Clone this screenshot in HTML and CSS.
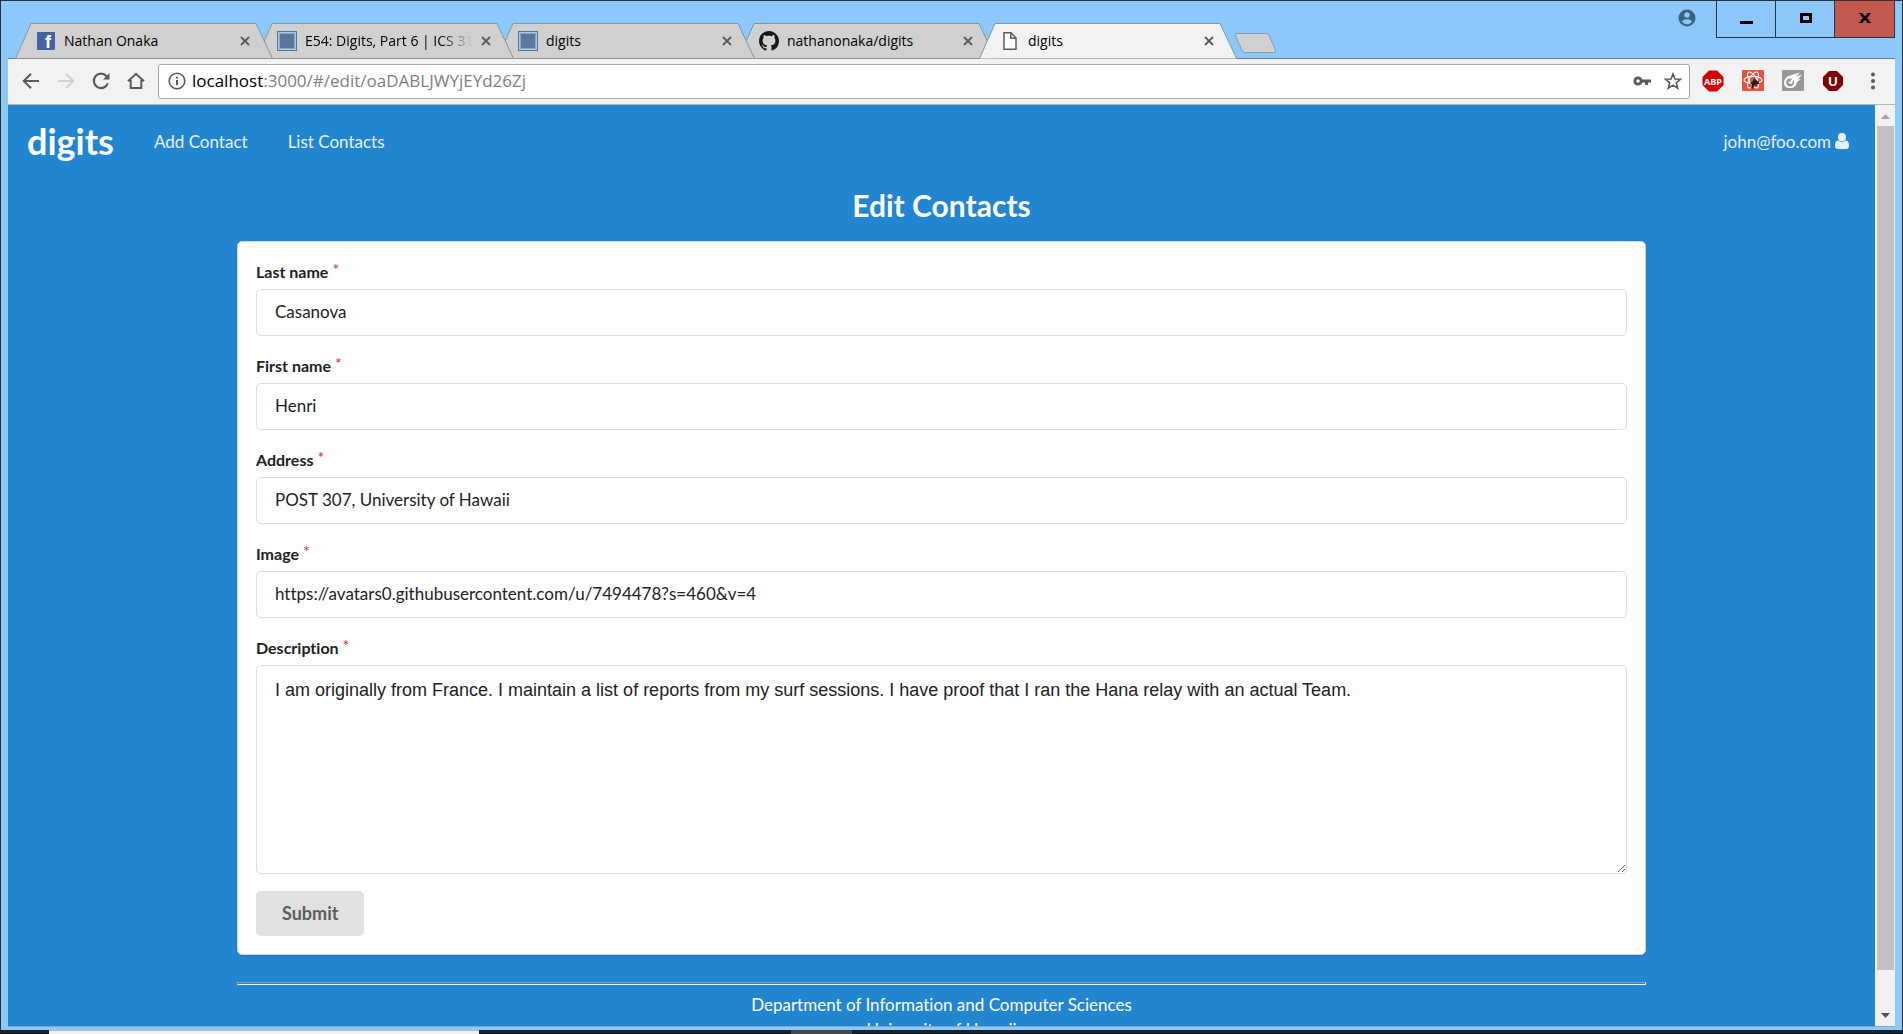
FILE: index.html
```html
<!DOCTYPE html>
<html lang="en">
<head>
<meta charset="utf-8">
<title>digits</title>
<link rel="stylesheet" href="styles.css">
</head>
<body>
<svg class="sprite" aria-hidden="true">
  <symbol id="tab-shape" viewBox="0 0 258 36"><path d="M0.500 35.500 L16 0.500 H241 L257.500 35.500"/></symbol>
  <symbol id="close" viewBox="0 0 10 10"><path d="M1 1 L9 9 M9 1 L1 9" stroke="#5a5a5a" stroke-width="1.800"/></symbol>
  <symbol id="square" viewBox="0 0 20 20"><rect x=".5" y=".5" width="19" height="19" fill="#b3c4d8" stroke="#4a78a8"/><rect x="2.500" y="2.500" width="15" height="15" fill="#5878a0" stroke="#8fa6c0"/></symbol>
</svg>
<div class="window">
  <header class="titlebar">
    <ul class="tabs">
      <li class="tab tab-1">
        <svg class="tab-bg"><use href="#tab-shape"/></svg>
        <svg class="favicon" viewBox="0 0 20 20"><rect x="1" y="1" width="18" height="18" rx="1" fill="#4661a5"/><text x="9" y="17" font-family="Liberation Sans" font-weight="bold" font-size="18" fill="#fff">f</text></svg>
        <span class="tab-title">Nathan Onaka</span>
        <button class="tab-close" aria-label="Close tab"><svg><use href="#close"/></svg></button>
      </li>
      <li class="tab tab-2">
        <svg class="tab-bg"><use href="#tab-shape"/></svg>
        <svg class="favicon"><use href="#square"/></svg>
        <span class="tab-title faded">E54: Digits, Part 6 | ICS 314</span>
        <button class="tab-close" aria-label="Close tab"><svg><use href="#close"/></svg></button>
      </li>
      <li class="tab tab-3">
        <svg class="tab-bg"><use href="#tab-shape"/></svg>
        <svg class="favicon"><use href="#square"/></svg>
        <span class="tab-title">digits</span>
        <button class="tab-close" aria-label="Close tab"><svg><use href="#close"/></svg></button>
      </li>
      <li class="tab tab-4">
        <svg class="tab-bg"><use href="#tab-shape"/></svg>
        <svg class="favicon" viewBox="0 0 16 16"><path fill="#191717" d="M8 0C3.58 0 0 3.58 0 8c0 3.54 2.29 6.53 5.47 7.59.4.07.55-.17.55-.38 0-.19-.01-.82-.01-1.49-2.01.37-2.53-.49-2.69-.94-.09-.23-.48-.94-.82-1.13-.28-.15-.68-.52-.01-.53.63-.01 1.08.58 1.23.82.72 1.21 1.87.87 2.33.66.07-.52.28-.87.51-1.07-1.78-.2-3.64-.89-3.64-3.95 0-.87.31-1.59.82-2.15-.08-.2-.36-1.02.08-2.12 0 0 .67-.21 2.2.82.64-.18 1.32-.27 2-.27s1.36.09 2 .27c1.53-1.04 2.2-.82 2.2-.82.44 1.1.16 1.92.08 2.12.51.56.82 1.27.82 2.15 0 3.07-1.87 3.75-3.65 3.95.29.25.54.73.54 1.48 0 1.07-.01 1.93-.01 2.2 0 .21.15.46.55.38A8.01 8.01 0 0 0 16 8c0-4.420-3.580-8-8-8z"/></svg>
        <span class="tab-title">nathanonaka/digits</span>
        <button class="tab-close" aria-label="Close tab"><svg><use href="#close"/></svg></button>
      </li>
      <li class="tab tab-active">
        <svg class="tab-bg"><use href="#tab-shape"/></svg>
        <svg class="favicon" viewBox="0 0 20 20"><path d="M4 1.800 H11 L16 7 V18.200 H4 Z M10.800 2 V7.200 H16" fill="#fff" stroke="#5c5c5c" stroke-width="1.500"/></svg>
        <span class="tab-title">digits</span>
        <button class="tab-close" aria-label="Close tab"><svg><use href="#close"/></svg></button>
      </li>
    </ul>
    <button class="new-tab" aria-label="New tab"><svg viewBox="0 0 43 22"><path d="M2 1.500 H32 Q34 1.500 35 3 L41.500 18 Q42 20.500 40 20.500 H11 Q9 20.500 8 18.500 L1.500 4 Q1 1.500 3 1.500Z" fill="#d0d0d0" stroke="#7f9cb8"/></svg></button>
    <span class="spacer"></span>
    <button class="profile" aria-label="Profile"><svg viewBox="0 0 18 18"><circle cx="9" cy="9" r="8.500" fill="#3f6180"/><circle cx="9" cy="6" r="2.700" fill="#8cc8fa"/><path d="M3.800 12.600 Q5.500 10.300 9 10.300 T14.200 12.600 Q12.300 15.300 9 15.300 T3.800 12.600Z" fill="#8cc8fa"/></svg></button>
    <div class="controls">
      <button aria-label="Minimize"><svg viewBox="0 0 14 12"><path d="M0 9 H13 V12 H0Z"/></svg></button>
      <button aria-label="Maximize"><svg viewBox="0 0 14 12"><path fill-rule="evenodd" d="M1 1 H13 V11 H1Z M4 4 V8 H10 V4Z"/></svg></button>
      <button class="close" aria-label="Close"><svg viewBox="0 0 14 12"><path d="M3 2 L11 10 M11 2 L3 10" stroke="#000" stroke-width="2.600"/><path d="M1 1H5V2H1ZM9 1H13V2H9ZM1 10H5V11H1ZM9 10H13V11H9Z"/></svg></button>
    </div>
  </header>
  <div class="toolbar">
    <button aria-label="Back"><svg viewBox="0 0 18 18"><path d="M17 9 H2.500 M9 1.800 L1.800 9 L9 16.200" fill="none" stroke="#5a5a5a" stroke-width="2"/></svg></button>
    <button aria-label="Forward"><svg viewBox="0 0 18 18"><path d="M1 9 H15.500 M9 1.800 L16.200 9 L9 16.200" fill="none" stroke="#d2d2d2" stroke-width="2"/></svg></button>
    <button aria-label="Reload"><svg viewBox="0 0 18 18"><path d="M15.800 11.300 A7.200 7.200 0 1 1 14.500 4.200" fill="none" stroke="#5a5a5a" stroke-width="2.200"/><path d="M17.500 1 V7.500 H11Z" fill="#5a5a5a"/></svg></button>
    <button aria-label="Home"><svg viewBox="0 0 18 18"><path d="M1 9.300 L9 1.800 L17 9.300 M3.700 8 V16 H14.300 V8" fill="none" stroke="#5a5a5a" stroke-width="2"/></svg></button>
    <div class="omnibox">
      <svg class="icon-18" viewBox="0 0 18 18"><circle cx="9" cy="9" r="7.800" fill="none" stroke="#5a5a5a" stroke-width="1.600"/><path d="M8 8 H10 V13 H8Z M8 4.700 H10 V6.600 H8Z" fill="#5a5a5a"/></svg>
      <div class="url"><span class="host">localhost</span>:3000/#/edit/oaDABLJWYjEYd26Zj</div>
      <svg class="icon-18" viewBox="0 0 18 18"><path fill-rule="evenodd" fill="#5a5a5a" d="M5 4.500 A4.500 4.500 0 1 0 9.300 10.500 H12 V13 H15 V10.500 H18 V7.500 H9.300 A4.500 4.500 0 0 0 5 4.500Z M5 7.200 A1.800 1.800 0 1 1 5 10.800 A1.800 1.800 0 1 1 5 7.200Z"/></svg>
      <svg class="icon-18" viewBox="0 0 18 18"><path d="M9 2 L11 7 L16.500 7.300 L12.300 10.800 L13.700 16.200 L9 13.200 L4.300 16.200 L5.700 10.800 L1.500 7.300 L7 7Z" fill="none" stroke="#5a5a5a" stroke-width="1.600"/></svg>
    </div>
    <div class="extensions">
      <svg class="ext" viewBox="0 0 22 22"><path d="M7 .5 H15 L21.500 7 V15 L15 21.500 H7 L.5 15 V7Z" fill="#d40000"/><text x="11" y="15" text-anchor="middle" font-family="Open Sans" font-weight="bold" font-size="9" fill="#fff">ABP</text></svg>
      <svg class="ext" viewBox="0 0 22 22"><rect x="0" y="0" width="22" height="21" rx="1" fill="#e8523f"/><g fill="none" stroke="#fff" stroke-width="1.100"><ellipse cx="11" cy="10" rx="9" ry="3.700"/><ellipse cx="11" cy="10" rx="9" ry="3.700" transform="rotate(60 11 10)"/><ellipse cx="11" cy="10" rx="9" ry="3.700" transform="rotate(120 11 10)"/></g><path d="M8 13 L11 11 L12 8 L14 10 L17 12 L17 14 L15 14 L15 16 L14 15 L12 16 L11 19 L9 18 L10 15Z" fill="#222"/></svg>
      <svg class="ext" viewBox="0 0 22 22"><rect x="0" y="0" width="22" height="21" rx="1" fill="#979797"/><path fill="#fff" fill-rule="evenodd" d="M2 13 Q2 7 8 5.500 L18 2.500 L14 6.500 L20 4.500 L16 9.500 L19 9 L15 12 Q14 18 8 18 Q2 18 2 13Z M8 8.500 A4 4 0 1 0 8.100 8.500Z"/><path d="M6 13 L12 7.500 L10 14Z" fill="#fff"/></svg>
      <svg class="ext" viewBox="0 0 22 22"><path d="M7 1 H15 L21 7 V15 L15 21 H7 L1 15 V7Z" fill="#800000"/><text x="11" y="16" text-anchor="middle" font-family="Liberation Sans" font-weight="bold" font-size="13" fill="#fff">U</text></svg>
    </div>
    <button class="menu-button" aria-label="Menu"><svg viewBox="0 0 18 18"><g fill="#5a5a5a"><circle cx="9" cy="2.500" r="2"/><circle cx="9" cy="9" r="2"/><circle cx="9" cy="15.500" r="2"/></g></svg></button>
  </div>
  <div class="viewport">
    <div class="page">
      <nav class="nav">
        <a class="brand" href="#/">digits</a>
        <a href="#/add">Add Contact</a>
        <a href="#/list">List Contacts</a>
        <span class="spacer"></span>
        <a class="user" href="#/account">john@foo.com
          <svg viewBox="0 0 14 16"><path fill="currentColor" d="M7 0 A4 4 0 0 1 11 4 Q11 8.500 7 8.500 T3 4 A4 4 0 0 1 7 0Z M3.200 7.500 Q4.800 9.300 7 9.300 T10.800 7.500 Q14 7.500 14 12.500 Q14 16 11 16 H3 Q0 16 0 12.500 Q0 7.500 3.200 7.500Z"/></svg></a>
      </nav>
      <main class="container">
        <h2>Edit Contacts</h2>
        <form class="segment">
          <div class="field"><label for="last">Last name</label><input id="last" type="text" value="Casanova"></div>
          <div class="field"><label for="first">First name</label><input id="first" type="text" value="Henri"></div>
          <div class="field"><label for="address">Address</label><input id="address" type="text" value="POST 307, University of Hawaii"></div>
          <div class="field"><label for="image">Image</label><input id="image" type="text" value="https://avatars0.githubusercontent.com/u/7494478?s=460&amp;v=4"></div>
          <div class="field"><label for="description">Description</label><textarea id="description">I am originally from France. I maintain a list of reports from my surf sessions. I have proof that I ran the Hana relay with an actual Team.</textarea></div>
          <button class="submit" type="button">Submit</button>
        </form>
      </main>
      <footer class="container footer">
        <hr>
        <div>Department of Information and Computer Sciences</div>
        <div>University of Hawaii</div>
      </footer>
    </div>
    <div class="scrollbar">
      <svg viewBox="0 0 20 21"><path d="M6 14 L10.500 9 L15 14Z" fill="#a3a3a3"/></svg>
      <div class="track"><div class="thumb"></div></div>
      <svg viewBox="0 0 20 21"><path d="M6 8 L10.500 13 L15 8Z" fill="#505050"/></svg>
    </div>
  </div>
</div>
<div class="taskbar"><span class="task-light"></span><span class="task-grey"></span></div>
</body>
</html>
```
FILE: styles.css
```css
* { box-sizing: border-box; }
body {
  margin: 0;
  height: 100vh;
  overflow: hidden;
  display: flex;
  flex-direction: column;
  font-family: "Open Sans", "Noto Sans", sans-serif;
  background: #0b1116;
}
button { border: 0; padding: 0; background: none; font: inherit; }
svg { display: block; flex: none; }
.sprite { position: absolute; width: 0; height: 0; }
.spacer { flex: 1; }

.window {
  flex: 1;
  min-height: 0;
  display: flex;
  flex-direction: column;
  background: #8cc8fa;
  border: 1px solid #2e2f3a;
  border-bottom: 0;
  padding: 0 7px 3px;
}

/* Tab strip */
.titlebar {
  height: 58px;
  display: flex;
  align-items: flex-end;
  border-bottom: 1px solid #6d7f90;
}
.tabs {
  display: flex;
  list-style: none;
  margin: 0 0 -1px 7px;
  padding: 0;
}
.tab {
  position: relative;
  display: flex;
  align-items: center;
  width: 257px;
  height: 36px;
  margin-right: -16px;
  padding: 0 22px 1px 21px;
  font-size: 14px;
  color: #000;
}
.tab-1 { z-index: 5; }
.tab-2 { z-index: 4; }
.tab-3 { z-index: 3; }
.tab-4 { z-index: 2; }
.tab-active { z-index: 6; }
.tab-bg {
  position: absolute;
  inset: 0;
  z-index: -1;
  width: 258px;
  height: 36px;
  fill: #d0d0d0;
  stroke: #8494a4;
}
.tab:not(.tab-active)::after {
  content: "";
  position: absolute;
  left: 0;
  right: 0;
  bottom: 0;
  border-bottom: 1px solid #909090;
}
.tab-active .tab-bg { fill: #f2f2f2; }
.favicon { width: 20px; height: 20px; }
.tab-title {
  flex: 1;
  min-width: 0;
  margin: 0 9px 0 8px;
  overflow: hidden;
  white-space: nowrap;
}
.faded {
  -webkit-mask-image: linear-gradient(to right, #000 80%, transparent);
  mask-image: linear-gradient(to right, #000 80%, transparent);
}
.tab-close svg { width: 10px; height: 10px; }
.new-tab { margin: 0 0 4px 14px; }
.new-tab svg { width: 43px; height: 22px; }
.profile { align-self: flex-start; margin: 8px 20px 0 0; }
.profile svg { width: 18px; height: 18px; }
.controls {
  display: flex;
  align-self: flex-start;
  border: 1px solid #2e3540;
  border-top: 0;
}
.controls button {
  width: 59px;
  height: 36px;
  padding: 11px 0 13px;
  box-shadow: -1px 0 #2e3540;
}
.controls svg { width: 14px; height: 12px; margin: 0 auto; }
.controls .close { background: #c1594f; }

/* Toolbar */
.toolbar {
  display: flex;
  align-items: center;
  height: 46px;
  padding: 0 13px 1px 14px;
  background: #f2f2f2;
  border-bottom: 1px solid #b5b5b5;
}
.toolbar button { margin-right: 17px; }
.toolbar button svg, .icon-18 { width: 18px; height: 18px; }
.toolbar .menu-button { margin: 0; }
.omnibox {
  flex: 1;
  display: flex;
  align-items: center;
  gap: 13px;
  height: 35px;
  margin-left: -4px;
  padding: 0 7px 0 9px;
  background: #fff;
  border: 1px solid #a8a8a8;
  border-radius: 3px;
}
.url {
  flex: 1;
  margin-left: -7px;
  font-size: 17px;
  line-height: 24px;
  color: #808080;
}
.host { color: #000; }
.extensions { display: flex; gap: 18px; margin: 0 20px 0 12px; }
.ext { width: 22px; height: 22px; }

/* Web page */
.viewport {
  flex: 1;
  min-height: 0;
  display: flex;
  border-bottom: 1px solid #85a5c8;
}
.page {
  flex: 1;
  overflow: hidden;
  background: #2185d0;
  color: #fff;
  font-family: Lato, sans-serif;
  font-size: 17px;
  font-variant-ligatures: none;
  line-height: 25px;
}
.nav {
  display: flex;
  align-items: center;
  height: 72px;
  padding: 0 26px 0 19px;
}
.nav a {
  margin-right: 40px;
  color: #e9f3fb;
  text-decoration: none;
}
.nav .brand { font-size: 36px; font-weight: bold; line-height: 40px; color: #fff; }
.nav .user { display: flex; align-items: center; gap: 4px; margin: 0; }
.user svg { width: 14px; height: 16px; }
.container { width: 1409px; max-width: 100%; margin: 0 auto; }
h2 {
  margin: 9px 0 17px;
  font-size: 30px;
  line-height: 38px;
  text-align: center;
}
.segment {
  padding: 18px;
  background: #fff;
  border: 1px solid #d4d8dc;
  border-radius: 5px;
  box-shadow: 0 1px 2px rgba(34, 36, 38, .15);
}
.field { margin-bottom: 18px; }
.field label {
  display: block;
  margin-bottom: 5px;
  font-size: 16px;
  font-weight: bold;
  line-height: 24px;
  color: #222;
}
.field label::after {
  content: "*";
  margin-left: 4px;
  vertical-align: top;
  line-height: 17px;
  font-weight: normal;
  color: #db2828;
}
.field input, .field textarea {
  display: block;
  width: 100%;
  height: 47px;
  padding: 0 18px 2px;
  border: 1px solid #dededf;
  border-radius: 5px;
  background: #fff;
  color: #222;
  font-family: Lato, sans-serif;
  font-size: 17px;
  font-variant-ligatures: none;
}
.field textarea {
  height: 209px;
  padding: 12px 18px;
  font-family: "Liberation Sans", Arial, sans-serif;
  font-size: 18px;
  line-height: 24px;
  resize: vertical;
}
.submit {
  display: block;
  height: 45px;
  margin-top: -1px;
  padding: 0 26px;
  background: #e0e1e2;
  border-radius: 5px;
  color: #5c5d5e;
  font-size: 18px;
  font-weight: bold;
}
.footer { text-align: center; }
hr {
  height: 3px;
  margin: 27px 0 7px;
  border: 1px solid;
  border-color: #9a9a9a #eee #eee #9a9a9a;
}

/* Scrollbar */
.scrollbar {
  display: flex;
  flex-direction: column;
  width: 20px;
  background: #f1f1f1;
}
.scrollbar svg { width: 20px; height: 21px; }
.track { flex: 1; padding: 0 1px 0 2px; }
.thumb { height: 96%; background: #c1c1c1; }

/* Desktop taskbar */
.taskbar { display: flex; height: 4px; border-top: 3px solid #17232b; }
.task-light { width: 430px; height: 4px; margin: -3px 0 0 49px; background: #f0f0f0; border-top: 1px solid #b8b8b8; }
.task-grey { width: 61px; height: 4px; margin: -3px 0 0 312px; background: #46484c; }
```
